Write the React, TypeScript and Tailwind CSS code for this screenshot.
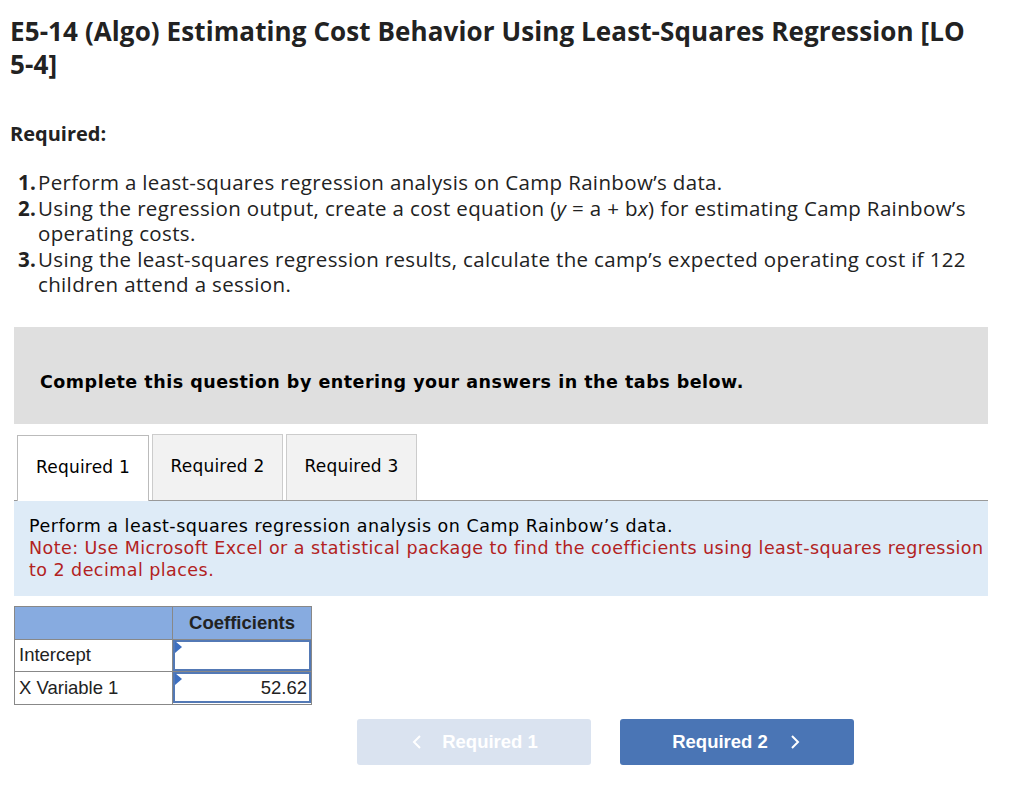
import React from 'react';

const items = [
  { n: '1.', text: <>Perform a least-squares regression analysis on Camp Rainbow’s data.</> },
  {
    n: '2.',
    text: (
      <>
        Using the regression output, create a cost equation (<i>y</i>&nbsp;= a + b<i>x</i>) for estimating Camp Rainbow’s operating costs.
      </>
    ),
  },
  {
    n: '3.',
    text: <>Using the least-squares regression results, calculate the camp’s expected operating cost if 122 children attend a session.</>,
  },
];

const tabs = ['Required 1', 'Required 2', 'Required 3'];

const Flag: React.FC = () => (
  <span className="absolute left-0 top-0 w-0 h-0 border-t-[6px] border-b-[6px] border-l-[7px] border-t-transparent border-b-transparent border-l-[#3d6fc0] -translate-y-[1px]" />
);

const App: React.FC = () => {
  return (
    <div className="min-h-screen bg-white text-[#222] font-['Open_Sans','Lato',sans-serif]">
      <div className="pl-[10px] pt-[15px]">
        <h1 className="w-[985px] text-[26px] leading-[33px] font-bold text-[#222] tracking-[0.1px]">
          E5-14 (Algo) Estimating Cost Behavior Using Least-Squares Regression [LO <span className="whitespace-nowrap">5-4]</span>
        </h1>
        <p className="mt-[38px] text-[20px] font-bold">Required:</p>
        <ol className="mt-[21px] pl-[8px] w-[975px] text-[20.5px] leading-[25.5px] tracking-[0.35px]">
          {items.map(it => (
            <li key={it.n} className="flex">
              <span className="font-bold w-[20px] shrink-0">{it.n}</span>
              <span>{it.text}</span>
            </li>
          ))}
        </ol>
      </div>

      <div className="mx-[14px] w-[974px] mt-[29px] font-['DejaVu_Sans','Verdana',sans-serif]">
        <div className="bg-[#dfdfdf] h-[97px] flex items-center pl-[26px] pt-[14px]">
          <p className="text-[17.5px] tracking-[0.5px] font-bold text-black">Complete this question by entering your answers in the tabs below.</p>
        </div>

        <div className="mt-[10px] flex items-end gap-[3px] pl-[3px] border-b border-[#999] h-[67px]">
          {tabs.map((t, i) => (
            <div
              key={t}
              className={
                i === 0
                  ? 'w-[132px] h-[66px] -mb-px bg-white border border-b-0 border-[#bbb] flex items-center justify-center text-[17px] tracking-[0.2px] text-black'
                  : 'w-[131px] h-[66px] bg-[#f2f2f2] border border-b-0 border-[#ccc] flex items-center justify-center text-[17px] tracking-[0.2px] text-black'
              }
            >
              {t}
            </div>
          ))}
        </div>

        <div className="bg-[#deebf7] h-[95px] pl-[15px] pt-[14px] text-[17.5px] leading-[22px] tracking-[0.5px]">
          <p className="text-black">Perform a least-squares regression analysis on Camp Rainbow’s data.</p>
          <p className="w-[968px] text-[#b22222] tracking-[0.45px]">Note: Use Microsoft Excel or a statistical package to find the coefficients using least-squares regression to 2 decimal places.</p>
        </div>

        <table className="mt-[10px] border-collapse font-['Liberation_Sans',Arial,sans-serif] text-[18.5px] text-[#222]">
          <tbody>
            <tr className="h-[33px] bg-[#87abe0]">
              <td className="w-[158px] border border-[#888]" />
              <td className="w-[139px] border border-[#888] text-center font-bold">Coefficients</td>
            </tr>
            <tr className="h-[32px]">
              <td className="border border-[#888] pl-[4px]">Intercept</td>
              <td className="border border-[#888] p-0">
                <div className="relative h-[31px] border-2 border-[#5379b5] bg-white">
                  <Flag />
                </div>
              </td>
            </tr>
            <tr className="h-[33px]">
              <td className="border border-[#888] pl-[4px]">X Variable 1</td>
              <td className="border border-[#888] p-0">
                <div className="relative h-[31px] border-2 border-[#5379b5] bg-white flex items-center justify-end pr-[2px]">
                  <Flag />
                  52.62
                </div>
              </td>
            </tr>
          </tbody>
        </table>

        <div className="mt-[14px] flex gap-[29px] pl-[343px] font-['Liberation_Sans',Arial,sans-serif]">
          <button className="w-[234px] h-[46px] rounded-[3px] bg-[#dae3f0] text-white font-bold text-[18.5px] flex items-center justify-center gap-[20px] pl-[2px]">
            <svg width="10" height="16" viewBox="0 0 10 16" fill="none" stroke="white" strokeWidth="2">
              <path d="M8 2 L2 8 L8 14" />
            </svg>
            Required 1
          </button>
          <button className="w-[234px] h-[46px] rounded-[3px] bg-[#4a75b5] text-white font-bold text-[18.5px] flex items-center justify-center gap-[22px] pr-[2px]">
            Required 2
            <svg width="10" height="16" viewBox="0 0 10 16" fill="none" stroke="white" strokeWidth="2">
              <path d="M2 2 L8 8 L2 14" />
            </svg>
          </button>
        </div>
      </div>
    </div>
  );
};

export default App;
